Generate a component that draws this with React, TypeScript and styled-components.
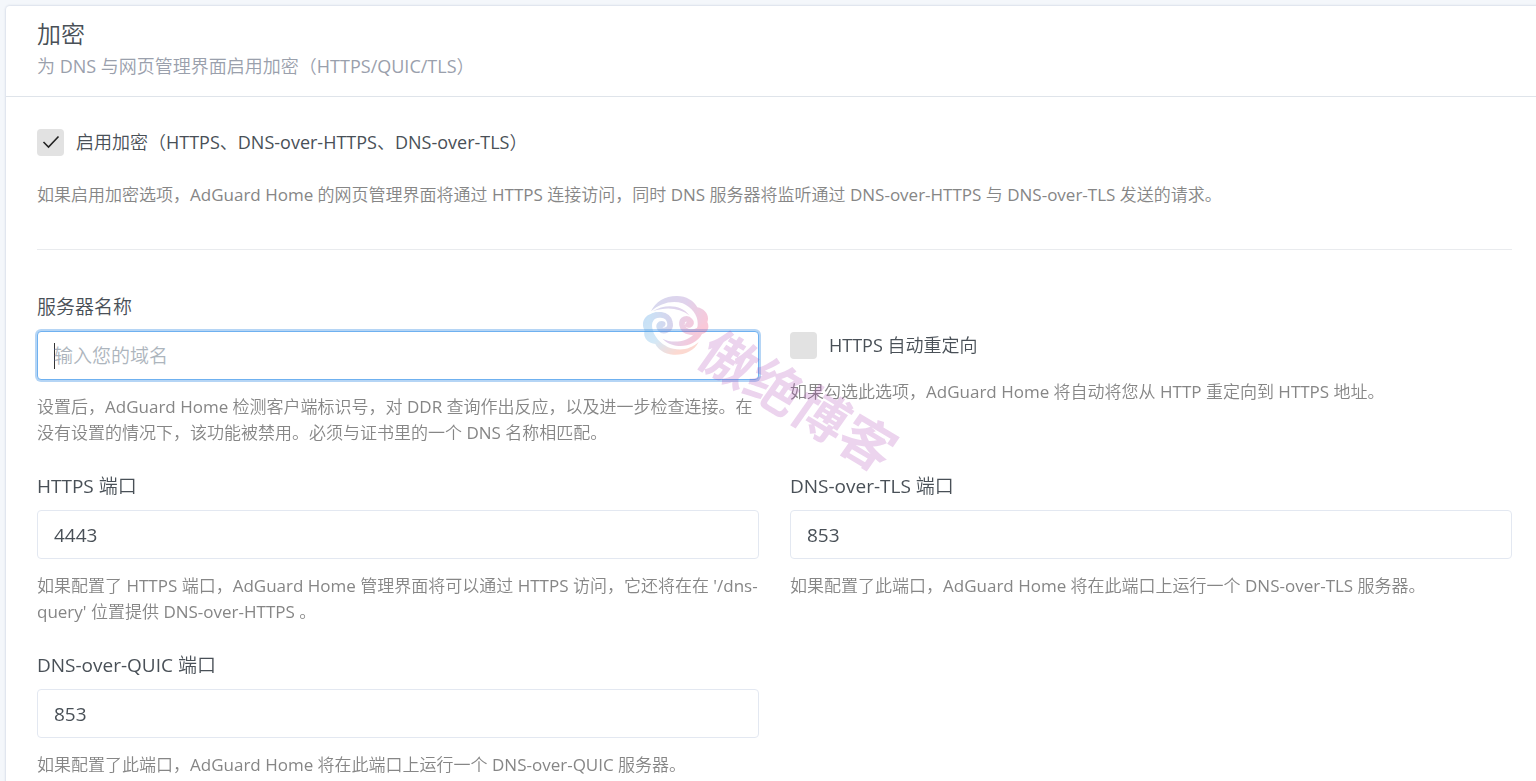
import React, { useEffect, useRef } from "react";
import styled, { createGlobalStyle } from "styled-components";

const GlobalStyle = createGlobalStyle`
  *, *::before, *::after { box-sizing: border-box; }
  body {
    margin: 0;
    background: #f4f7fb;
    color: #495057;
    font-family: "Open Sans", "Noto Sans CJK SC DemiLight", "Noto Sans CJK SC", sans-serif;
    font-size: 18px;
    line-height: 28px;
  }
`;

const Page = styled.main`
  padding: 6px 0 0 6px;
  overflow: hidden;
  height: 100vh;
`;

const Card = styled.section`
  background: #fff;
  border-radius: 4px 0 0 0;
  box-shadow: 0 0 2px 1px rgba(0, 40, 100, 0.1);
  min-height: 100%;
`;

const CardHeader = styled.header`
  padding: 12px 32px 14px 31px;
  border-bottom: 1px solid #dfe4ea;
`;

const Title = styled.h1`
  margin: 0;
  font-size: 24px;
  line-height: 32px;
  font-weight: 400;
`;

const Subtitle = styled.p`
  margin: 0;
  line-height: 32px;
  color: #9aa0ac;
`;

const CardBody = styled.form`
  padding: 30px 24px 24px 31px;
`;

const Divider = styled.hr`
  margin: 41px 0 43px;
  border: 0;
  border-top: 1px solid #e9ebee;
`;

const Grid = styled.div`
  display: grid;
  grid-template-columns: 1fr 1fr;
  column-gap: 31px;
  row-gap: 26px;
`;

const Check = styled.label`
  display: flex;
  align-items: center;
  gap: 12px;
  line-height: 30px;
`;

const CheckBox = styled.input`
  appearance: none;
  flex: none;
  width: 27px;
  height: 27px;
  margin: 0;
  border-radius: 4px;
  background: #e2e2e2 center / 18px 18px no-repeat;
  &:checked {
    background-image: url("data:image/svg+xml,%3Csvg xmlns='http://www.w3.org/2000/svg' viewBox='0 0 18 18'%3E%3Cpath d='M1.5 9 6.5 14 16.5 3.5' fill='none' stroke='%23222' stroke-width='1.6'/%3E%3C/svg%3E");
  }
`;

const Field = styled.div<{ $offset?: boolean }>`
  padding-top: ${(p) => (p.$offset ? "37px" : "0")};
`;

const Label = styled.label`
  display: block;
  margin-bottom: 10px;
  font-size: 19px;
  line-height: 28px;
`;

const TextBox = styled.input`
  display: block;
  width: 100%;
  height: 49px;
  padding: 1px 16px 0;
  border: 1px solid #e3e8f1;
  border-radius: 4px;
  background: #fff;
  color: #495057;
  font: inherit;
  font-size: 19px;
  outline: 0;
  &::placeholder { color: #adb5bd; opacity: 1; }
  &:focus {
    border-color: #6fb1f0;
    box-shadow: 0 0 0 2px rgba(70, 150, 230, 0.4);
  }
  &:focus:placeholder-shown {
    caret-color: transparent;
    background: linear-gradient(#333, #333) 16px center / 1px 26px no-repeat #fff;
  }
`;

const Hint = styled.p<{ $gap?: number }>`
  margin: ${(p) => p.$gap ?? 14}px 0 0;
  font-size: 17px;
  line-height: 26px;
  color: #868686;
`;

const Watermark = styled.div`
  position: fixed;
  inset: 0;
  display: flex;
  align-items: center;
  justify-content: center;
  padding-bottom: 17px;
  pointer-events: none;
`;

function WatermarkArt() {
  return (
    <svg width="260" height="180" viewBox="0 0 260 180" overflow="visible">
      <defs>
        <linearGradient id="upper" gradientUnits="userSpaceOnUse" x1="50" y1="40" x2="210" y2="120">
          <stop offset="0" stopColor="#7a80c8" />
          <stop offset="0.5" stopColor="#9a6cc0" />
          <stop offset="1" stopColor="#f0487c" />
        </linearGradient>
        <linearGradient id="lower" gradientUnits="userSpaceOnUse" x1="40" y1="80" x2="120" y2="190">
          <stop offset="0" stopColor="#4a9ae0" />
          <stop offset="0.5" stopColor="#6cb4e4" />
          <stop offset="1" stopColor="#f58268" />
        </linearGradient>
        <linearGradient id="curl" gradientUnits="userSpaceOnUse" x1="30" y1="100" x2="110" y2="100">
          <stop offset="0" stopColor="#4aa4e4" />
          <stop offset="1" stopColor="#7f70c0" />
        </linearGradient>
        <linearGradient id="curl2" gradientUnits="userSpaceOnUse" x1="125" y1="90" x2="200" y2="120">
          <stop offset="0" stopColor="#b064b0" />
          <stop offset="1" stopColor="#f0487c" />
        </linearGradient>
      </defs>
      <g transform="translate(-2 -2) scale(0.3333)" opacity="0.3">
        <path
          fill="url(#upper)"
          d="M45 64C58 35 88 18 122 18C150 18 174 32 184 52C206 56 222 76 214 96C222 112 214 130 198 132C186 156 156 170 128 168C108 166 90 158 80 146C106 160 148 158 172 134L184 112C190 82 172 54 140 40C108 30 72 40 45 64Z"
        />
        <path fill="url(#upper)" d="M50 64C84 42 136 42 160 76C130 54 92 50 50 64Z" />
        <path
          fill="url(#lower)"
          d="M44 72C60 62 82 68 92 78C70 74 50 84 48 104C48 136 76 168 112 176C140 182 166 176 188 156C174 184 144 196 112 194C84 192 66 178 58 162C34 160 20 140 26 122C14 102 24 78 44 72Z"
        />
        <path
          fill="none"
          stroke="url(#curl)"
          strokeWidth="17"
          strokeLinecap="round"
          d="M40 92C56 66 98 70 102 98C106 120 82 128 72 116C66 106 72 100 80 102"
        />
        <path
          fill="none"
          stroke="url(#curl2)"
          strokeWidth="17"
          strokeLinecap="round"
          d="M198 112C180 134 142 130 138 104C136 86 154 82 162 92C168 98 164 108 156 104"
        />
      </g>
      <text
        transform="translate(56 70) rotate(31) skewX(-4)"
        fontFamily="Noto Sans CJK SC, sans-serif"
        fontWeight="700"
        fontSize="54"
        fill="#a83cb0"
        opacity="0.22"
      >
        傲绝博客
      </text>
    </svg>
  );
}

interface PortProps {
  id: string;
  label: string;
  value: string;
  hint: string;
}

function PortField({ id, label, value, hint }: PortProps) {
  return (
    <Field>
      <Label htmlFor={id}>{label}</Label>
      <TextBox id={id} defaultValue={value} />
      <Hint>{hint}</Hint>
    </Field>
  );
}

export default function App() {
  const server = useRef<HTMLInputElement>(null);
  useEffect(() => server.current?.focus(), []);

  return (
    <Page lang="zh-CN">
      <GlobalStyle />
      <Card>
        <CardHeader>
          <Title>加密</Title>
          <Subtitle>为 DNS 与网页管理界面启用加密（HTTPS/QUIC/TLS）</Subtitle>
        </CardHeader>
        <CardBody>
          <Check>
            <CheckBox type="checkbox" defaultChecked />
            启用加密（HTTPS、DNS-over-HTTPS、DNS-over-TLS）
          </Check>
          <Hint $gap={25}>
            如果启用加密选项，AdGuard Home 的网页管理界面将通过 HTTPS 连接访问，同时 DNS 服务器将监听通过 DNS-over-HTTPS 与 DNS-over-TLS 发送的请求。
          </Hint>
          <Divider />
          <Grid>
            <Field>
              <Label htmlFor="server-name">服务器名称</Label>
              <TextBox id="server-name" ref={server} placeholder="输入您的域名" />
              <Hint>
                设置后，AdGuard Home 检测客户端标识号，对 DDR 查询作出反应，以及进一步检查连接。在没有设置的情况下，该功能被禁用。必须与证书里的一个 DNS 名称相匹配。
              </Hint>
            </Field>
            <Field $offset>
              <Check>
                <CheckBox type="checkbox" />
                HTTPS 自动重定向
              </Check>
              <Hint $gap={19}>如果勾选此选项，AdGuard Home 将自动将您从 HTTP 重定向到 HTTPS 地址。</Hint>
            </Field>
            <PortField id="https-port" label="HTTPS 端口" value="4443" hint="如果配置了 HTTPS 端口，AdGuard Home 管理界面将可以通过 HTTPS 访问，它还将在在 '/dns-query' 位置提供 DNS-over-HTTPS 。" />
            <PortField id="dot-port" label="DNS-over-TLS 端口" value="853" hint="如果配置了此端口，AdGuard Home 将在此端口上运行一个 DNS-over-TLS 服务器。" />
            <PortField id="doq-port" label="DNS-over-QUIC 端口" value="853" hint="如果配置了此端口，AdGuard Home 将在此端口上运行一个 DNS-over-QUIC 服务器。" />
          </Grid>
        </CardBody>
      </Card>
      <Watermark>
        <WatermarkArt />
      </Watermark>
    </Page>
  );
}
